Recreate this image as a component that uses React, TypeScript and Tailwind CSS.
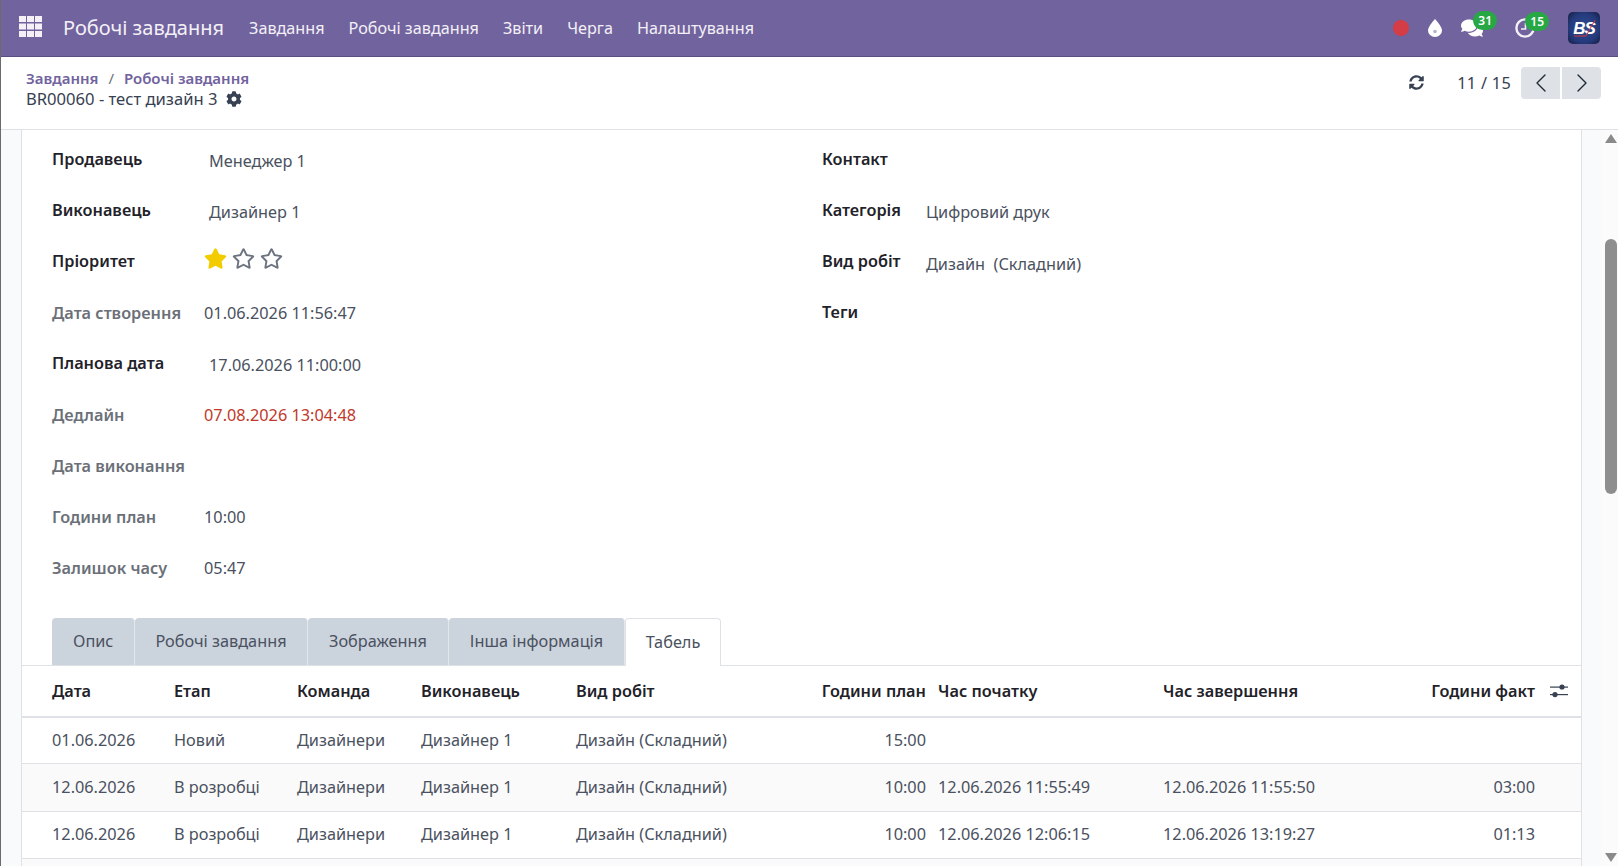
import { FaCog, FaComments, FaRegStar, FaStar, FaSyncAlt } from "react-icons/fa";
import { FiChevronLeft, FiChevronRight } from "react-icons/fi";

const menu = ["Завдання", "Робочі завдання", "Звіти", "Черга", "Налаштування"];

const AppsIcon = () => (
    <svg width="23" height="21" viewBox="0 0 23 21" fill="#f3f0f6">
        <rect x="0" y="0" width="7" height="6" />
        <rect x="8" y="0" width="7" height="6" />
        <rect x="16" y="0" width="7" height="6" />
        <rect x="0" y="7.5" width="7" height="6" />
        <rect x="8" y="7.5" width="7" height="6" />
        <rect x="16" y="7.5" width="7" height="6" />
        <rect x="0" y="15" width="7" height="6" />
        <rect x="8" y="15" width="7" height="6" />
        <rect x="16" y="15" width="7" height="6" />
    </svg>
);

const AdjustIcon = () => (
    <svg width="18" height="16" viewBox="0 0 18 16" fill="#374151">
        <rect x="0" y="3.5" width="18" height="1.2" />
        <rect x="0" y="11" width="18" height="1.2" />
        <circle cx="12" cy="4" r="2.6" />
        <circle cx="5" cy="11.6" r="2.6" />
    </svg>
);

const DropIcon = () => (
    <svg width="14" height="18" viewBox="0 0 14 18">
        <path d="M7 0 C7 0 14 7.5 14 11.5 A7 6.5 0 0 1 0 11.5 C0 7.5 7 0 7 0Z" fill="#ffffff" />
        <circle cx="7" cy="12.5" r="1.8" fill="#b9b2d0" />
    </svg>
);

const ClockIcon = () => (
    <svg width="20" height="20" viewBox="0 0 20 20" fill="none" stroke="#f3f0f6" strokeWidth="2.4">
        <circle cx="10" cy="10" r="8.6" />
        <path d="M10.5 5 V11 H6" strokeWidth="1.6" />
    </svg>
);

const Badge = ({ value }: { value: string }) => (
    <span className="absolute -top-[6px] -right-[14px] bg-[#28a745] text-white text-[12px] font-semibold leading-[19px] h-[19px] px-[5px] rounded-full">
        {value}
    </span>
);

const Logo = () => (
    <div className="relative w-8 h-8 rounded-[5px] bg-[radial-gradient(circle,#2f4c94_0%,#24397a_65%,#141d3c_100%)] overflow-hidden flex items-center justify-center">
        <span className="text-white text-[17px] font-black italic leading-none tracking-[-1px] font-['Liberation_Sans',sans-serif]">BS</span>
        <svg className="absolute inset-0" width="32" height="32" viewBox="0 0 32 32" fill="none" stroke="#d8363c" strokeWidth="1">
            <path d="M27 8 L18 24 L6 24" />
        </svg>
    </div>
);

const Field = ({ label, value, muted, valueClass }: { label: string; value?: string; muted?: boolean; valueClass?: string }) => (
    <div className="h-[51px] flex items-center">
        <div className={`font-semibold leading-none ${muted ? "w-[152px] text-[#6b7078]" : "w-[157px] text-[#1f2229] -mt-[2px]"}`}>{label}</div>
        <div className={`${valueClass ?? "text-[#4a5160]"} ${muted ? "" : "mt-[1px]"}`}>{value}</div>
    </div>
);

const RightField = ({ label, value, valueClass }: { label: string; value?: string; valueClass?: string }) => (
    <div className="h-[51px] flex items-center">
        <div className="w-[104px] font-semibold text-[#1f2229] -mt-[2px]">{label}</div>
        <div className={`text-[#4a5160] whitespace-pre ${valueClass ?? ""}`}>{value}</div>
    </div>
);

const rows = [
    ["01.06.2026", "Новий", "Дизайнери", "Дизайнер 1", "Дизайн (Складний)", "15:00", "", "", ""],
    ["12.06.2026", "В розробці", "Дизайнери", "Дизайнер 1", "Дизайн (Складний)", "10:00", "12.06.2026 11:55:49", "12.06.2026 11:55:50", "03:00"],
    ["12.06.2026", "В розробці", "Дизайнери", "Дизайнер 1", "Дизайн (Складний)", "10:00", "12.06.2026 12:06:15", "12.06.2026 13:19:27", "01:13"],
    ["", "", "", "", "", "", "", "", ""],
];

const rowHeights = ["h-[46px]", "h-[48px]", "h-[47px]", "h-[47px]"];

const tabs = [
    { name: "Опис", cls: "px-[21px]" },
    { name: "Робочі завдання", cls: "px-[20px]" },
    { name: "Зображення", cls: "px-[21.5px]" },
    { name: "Інша інформація", cls: "px-[20.5px]" },
];

const App = () => {
    return (
        <div className="h-[866px] w-[1618px] overflow-hidden flex flex-col bg-white text-[16.3px] border-l border-[#6b6b6b]" style={{ fontFamily: '"Noto Sans", sans-serif' }}>
            <div className="h-[57px] shrink-0 bg-[#71639e] border-b border-[#5a4f80] flex items-center text-white">
                <div className="ml-[18px] w-[23px] -mt-[3px]"><AppsIcon /></div>
                <div className="ml-[21px] text-[20px] text-[#f3f0f6]">Робочі завдання</div>
                <div className="ml-[25px] flex gap-6 text-[16.2px] text-[#f3f0f6]">
                    {menu.map((m) => <span key={m}>{m}</span>)}
                </div>
                <div className="ml-auto mr-[18px] flex items-center">
                    <span className="w-4 h-4 rounded-full bg-[#d43c46]" />
                    <span className="ml-[19px]"><DropIcon /></span>
                    <span className="relative ml-[19px]">
                        <FaComments className="text-white" size={22} />
                        <Badge value="31" />
                    </span>
                    <span className="relative ml-[32px]">
                        <ClockIcon />
                        <Badge value="15" />
                    </span>
                    <div className="ml-[33px]"><Logo /></div>
                </div>
            </div>

            <div className="h-[73px] shrink-0 bg-white border-b border-[#dee2e6] flex justify-between pl-[25px] pr-[17px]">
                <div className="pt-[11px]">
                    <div className="text-[15px] font-semibold text-[#71639e] leading-5">
                        Завдання <span className="font-normal text-[#6b7078] mx-[6px]">/</span> Робочі завдання
                    </div>
                    <div className="flex items-center gap-[9px] text-[16.6px] text-[#374151] leading-[22px]">
                        BR00060 - тест дизайн 3 <FaCog className="text-[#374151]" size={16} />
                    </div>
                </div>
                <div className="flex items-start pt-[10px]">
                    <FaSyncAlt className="text-[#374151] mt-[8px]" size={15} />
                    <span className="ml-[33px] mt-[4px] text-[#374151] tracking-[0.3px]">11 / 15</span>
                    <div className="ml-[10px] flex gap-[2px]">
                        <button className="w-[39px] h-8 bg-[#dee2e6] rounded-l-[4px] flex items-center justify-center text-[#1f2937]"><FiChevronLeft size={32} strokeWidth={1} /></button>
                        <button className="w-[39px] h-8 bg-[#dee2e6] rounded-r-[4px] flex items-center justify-center text-[#1f2937]"><FiChevronRight size={32} strokeWidth={1} /></button>
                    </div>
                </div>
            </div>

            <div className="flex-1 flex min-h-0 bg-[#f9fafb]">
                <div className="w-[20px] shrink-0" />
                <div className="w-[1561px] shrink-0 bg-white border-x border-[#dee2e6] overflow-hidden">
                    <div className="flex pt-[5px]">
                        <div className="w-[800px] pl-[30px] shrink-0">
                            <Field label="Продавець" value="Менеджер 1" />
                            <Field label="Виконавець" value="Дизайнер 1" />
                            <div className="h-[51px] flex items-center">
                                <div className="w-[152px] font-semibold text-[#1f2229] -mt-[2px]">Пріоритет</div>
                                <div className="flex gap-[5px] -mt-[8px] text-[#6b7280]">
                                    <FaStar className="text-[#f3cc00]" size={23} />
                                    <FaRegStar size={23} />
                                    <FaRegStar size={23} />
                                </div>
                            </div>
                            <Field label="Дата створення" value="01.06.2026 11:56:47" muted />
                            <Field label="Планова дата" value="17.06.2026 11:00:00" />
                            <Field label="Дедлайн" value="07.08.2026 13:04:48" muted valueClass="text-[#c0392b]" />
                            <Field label="Дата виконання" muted />
                            <Field label="Години план" value="10:00" muted />
                            <Field label="Залишок часу" value="05:47" muted />
                        </div>
                        <div>
                            <RightField label="Контакт" />
                            <RightField label="Категорія" value="Цифровий друк" valueClass="mt-[1px]" />
                            <RightField label="Вид робіт" value="Дизайн  (Складний)" valueClass="mt-[3px]" />
                            <RightField label="Теги" />
                        </div>
                    </div>

                    <div className="mt-[24px] pl-[30px] flex border-b border-[#dee2e6] h-[48px]">
                        {tabs.map((t) => (
                            <div key={t.name} className={`${t.cls} h-[47px] flex items-center bg-[#cbd3dd] text-[#4a5160] border-r border-[#e3e7ec] rounded-t-[4px] whitespace-nowrap`}>{t.name}</div>
                        ))}
                        <div className="px-[20px] h-[48px] flex items-center bg-white text-[#4a5160] border border-b-0 border-[#dee2e6] rounded-t-[4px]">Табель</div>
                    </div>

                    <table className="w-full table-fixed border-collapse">
                        <colgroup>
                            <col className="w-[152px]" />
                            <col className="w-[123px]" />
                            <col className="w-[124px]" />
                            <col className="w-[155px]" />
                            <col className="w-[200px]" />
                            <col className="w-[150px]" />
                            <col className="w-[225px]" />
                            <col className="w-[249px]" />
                            <col className="w-[135px]" />
                            <col />
                        </colgroup>
                        <thead>
                            <tr className="h-[51px] border-b-2 border-[#dee2e6] text-[#1f2229] font-semibold text-left">
                                <th className="pl-[30px] font-semibold">Дата</th>
                                <th className="font-semibold">Етап</th>
                                <th className="font-semibold">Команда</th>
                                <th className="font-semibold">Виконавець</th>
                                <th className="font-semibold">Вид робіт</th>
                                <th className="font-semibold text-right whitespace-nowrap">Години план</th>
                                <th className="pl-3 font-semibold">Час початку</th>
                                <th className="pl-3 font-semibold">Час завершення</th>
                                <th className="font-semibold text-right whitespace-nowrap">Години факт</th>
                                <th className="pl-[15px]"><AdjustIcon /></th>
                            </tr>
                        </thead>
                        <tbody className="text-[#4a5160]">
                            {rows.map((r, i) => (
                                <tr key={i} className={`${rowHeights[i]} border-b border-[#dee2e6] ${i % 2 === 1 ? "bg-[#fafafa]" : ""}`}>
                                    <td className="pl-[30px]">{r[0]}</td>
                                    <td>{r[1]}</td>
                                    <td>{r[2]}</td>
                                    <td>{r[3]}</td>
                                    <td className="whitespace-nowrap">{r[4]}</td>
                                    <td className="text-right">{r[5]}</td>
                                    <td className="pl-3 whitespace-nowrap">{r[6]}</td>
                                    <td className="pl-3 whitespace-nowrap">{r[7]}</td>
                                    <td className="text-right">{r[8]}</td>
                                    <td />
                                </tr>
                            ))}
                        </tbody>
                    </table>
                </div>
                <div className="flex-1" />
                <div className="w-[16px] shrink-0 bg-[#fbfbfb] flex flex-col items-end pr-[1px]">
                    <div className="h-[17px] flex items-center justify-center">
                        <div className="w-0 h-0 border-x-[6px] border-x-transparent border-b-[9px] border-b-[#8a8a8a]" />
                    </div>
                    <div className="mt-[92px] w-[12px] h-[255px] rounded-full bg-[#8e8e8e]" />
                    <div className="mt-auto h-[17px] flex items-center justify-center">
                        <div className="w-0 h-0 border-x-[6px] border-x-transparent border-t-[9px] border-t-[#8a8a8a]" />
                    </div>
                </div>
            </div>
        </div>
    );
};

export default App;
